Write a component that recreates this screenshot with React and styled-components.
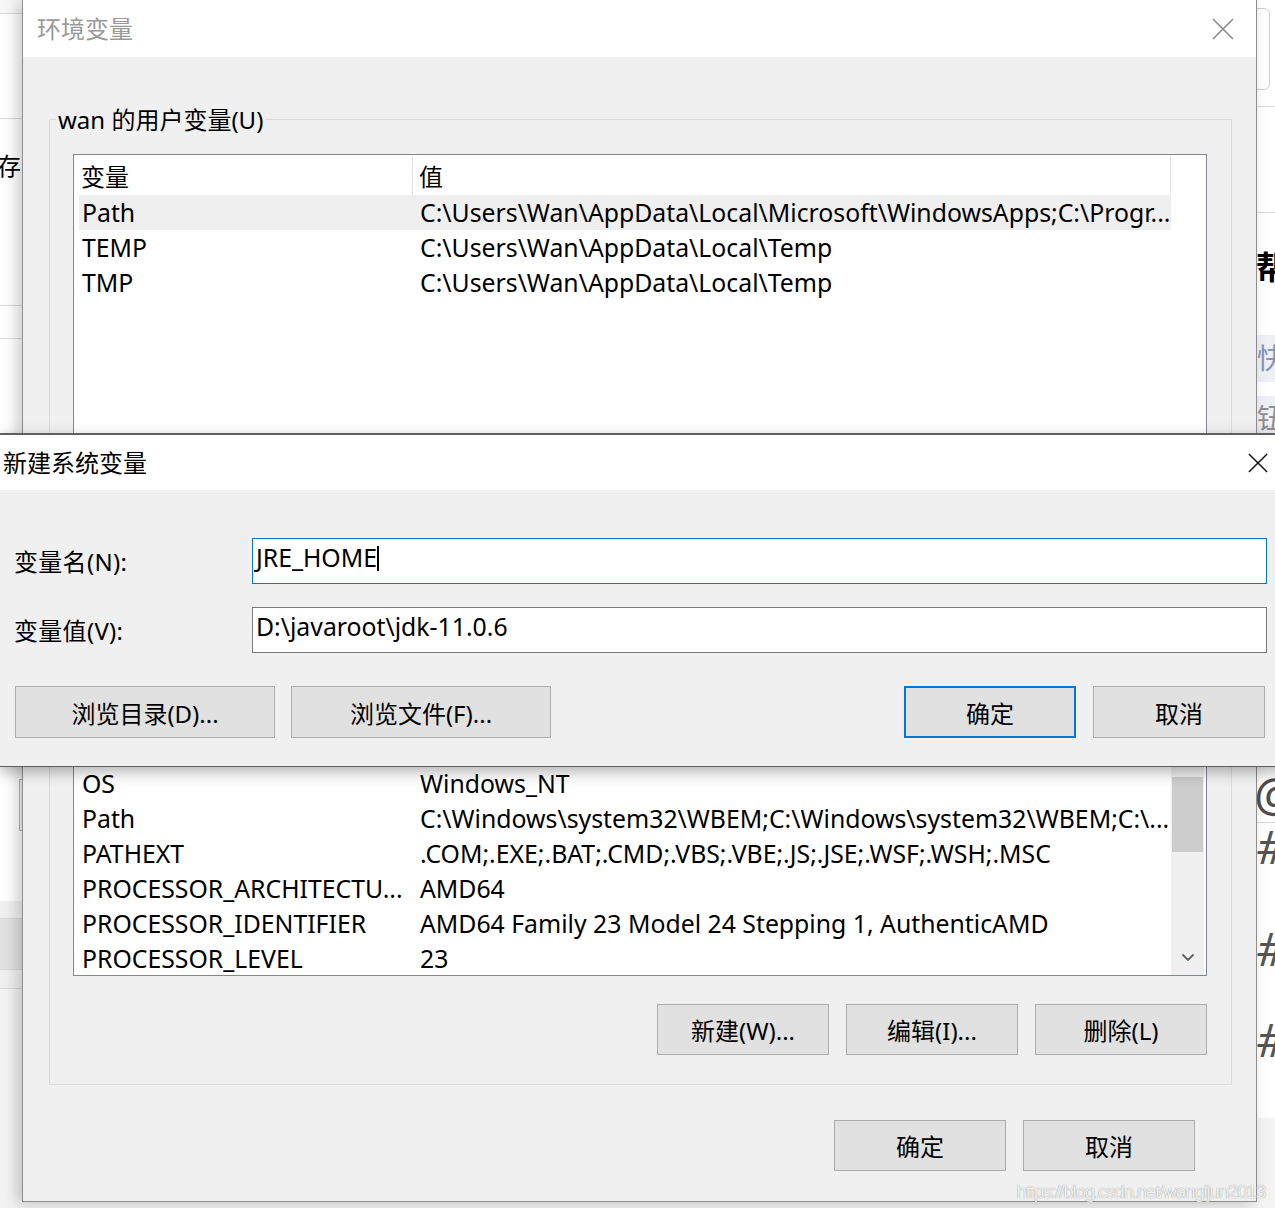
import React from 'react';
import styled, { createGlobalStyle } from 'styled-components';

const GlobalStyle = createGlobalStyle`
  html, body { margin: 0; padding: 0; }
  body {
    width: 1275px;
    height: 1208px;
    overflow: hidden;
    background: #f3f3f3;
    font-family: "Noto Sans", "Noto Sans CJK SC", sans-serif;
  }
  * { box-sizing: border-box; }
`;

const Desktop = styled.div`
  position: relative;
  width: 1275px;
  height: 1208px;
  overflow: hidden;
  font-size: 24px;
  color: #000;
`;

/* ---------- page behind the dialogs (only slivers are visible) ---------- */

const BackPage = styled.div`
  display: flex;
  justify-content: space-between;
  height: 100%;
`;

const LeftPane = styled.div`
  width: 40px;
  display: flex;
  flex-direction: column;
  background: #fff;
`;

const RightPane = styled.div`
  width: 30px;
  display: flex;
  flex-direction: column;
  background: #fff;
`;

const PaneBlock = styled.div`
  height: ${(p) => p.$h}px;
  flex-shrink: 0;
  background: ${(p) => p.$bg || '#fff'};
  border-bottom: ${(p) => (p.$line ? '1px solid #d9d9d9' : 'none')};
  padding-top: ${(p) => p.$pad || 0}px;
  display: flex;
  flex-direction: column;
`;

const PaneFill = styled.div`
  flex: 1;
  background: #f3f3f3;
`;

const CutText = styled.span`
  display: block;
  margin-left: ${(p) => p.$x || 0}px;
  margin-top: ${(p) => p.$y || 0}px;
  font-size: ${(p) => p.$size || 24}px;
  line-height: 1.2;
  font-weight: ${(p) => (p.$bold ? 700 : 400)};
  font-style: ${(p) => (p.$italic ? 'italic' : 'normal')};
  color: ${(p) => p.$color || '#000'};
  white-space: nowrap;
`;

const ScrollNub = styled.div`
  margin: 440px 0 0 19px;
  width: 6px;
  height: 52px;
  border: 1px solid #b5b5b5;
  background: #f4f4f4;
`;

const RoundBox = styled.div`
  margin-top: 8px;
  width: 25px;
  height: 82px;
  border: 1px solid #cfcfcf;
  border-radius: 6px;
`;

const TagBox = styled.div`
  margin-top: ${(p) => p.$top}px;
  height: ${(p) => p.$h}px;
  background: #eef0f6;
  display: flex;
  align-items: center;
`;

/* ---------- shared dialog pieces ---------- */

const TitleBar = styled.header`
  height: ${(p) => p.$h}px;
  flex-shrink: 0;
  background: #fff;
  display: flex;
  align-items: center;
  justify-content: space-between;
  padding: 0 ${(p) => p.$padRight}px 0 ${(p) => p.$padLeft}px;
`;

const Title = styled.span`
  font-size: 24px;
  color: ${(p) => p.$color};
  line-height: 1;
`;

const Button = styled.button`
  width: ${(p) => p.$w}px;
  height: ${(p) => p.$h || 51}px;
  padding: 0;
  background: #e1e1e1;
  border: ${(p) => (p.$default ? '2px solid #0078d7' : '1px solid #adadad')};
  font-family: inherit;
  font-size: 24px;
  color: #000;
  display: flex;
  align-items: center;
  justify-content: center;
`;

const ButtonRow = styled.div`
  display: flex;
  justify-content: ${(p) => p.$justify || 'flex-end'};
  gap: ${(p) => p.$gap || 17}px;
  margin-top: ${(p) => p.$top}px;
  margin-right: ${(p) => p.$right || 0}px;
  margin-left: ${(p) => p.$left || 0}px;
`;

const ButtonGroup = styled.div`
  display: flex;
  gap: ${(p) => p.$gap}px;
`;

const CloseIcon = ({ color, size = 22 }) => (
  <svg width={size} height={size} viewBox="0 0 22 22">
    <path d="M1 1 L21 21 M21 1 L1 21" stroke={color} strokeWidth="1.6" fill="none" />
  </svg>
);

/* ---------- 环境变量 dialog ---------- */

const EnvDialog = styled.section`
  position: absolute;
  left: 22px;
  top: 0;
  width: 1235px;
  height: 1202px;
  border: 1px solid #8e8e8e;
  border-top: none;
  background: #f0f0f0;
  box-shadow: -5px 2px 14px rgba(0, 0, 0, 0.2);
  display: flex;
  flex-direction: column;
`;

const EnvBody = styled.div`
  flex: 1;
  display: flex;
  flex-direction: column;
  padding: 48px 24px 0 26px;
`;

const GroupBox = styled.fieldset`
  margin: ${(p) => p.$top || 0}px 0 0;
  min-width: 0;
  border: 1px solid #dcdcdc;
  padding: 21px 24px 29px 23px;
`;

const Legend = styled.legend`
  margin-left: -17px;
  padding: 2px 2px 0;
  font-size: 24px;
  line-height: 26px;
  color: #000;
`;

const ListBox = styled.div`
  height: ${(p) => p.$h}px;
  border: 1px solid #828790;
  background: #fff;
  padding-left: 5px;
  display: flex;
  overflow: hidden;
`;

const ListContent = styled.div`
  flex: 1;
  min-width: 0;
  display: flex;
  flex-direction: column;
`;

const HeaderRow = styled.div`
  height: 40px;
  flex-shrink: 0;
  display: grid;
  grid-template-columns: 334px 1fr;
`;

const HeaderCell = styled.div`
  border-right: 1px solid #e5e5e5;
  padding-left: ${(p) => p.$pad}px;
  line-height: 42px;
  margin: 1px 0 2px;
`;

const Row = styled.div`
  height: 35px;
  flex-shrink: 0;
  display: grid;
  grid-template-columns: 334px 1fr;
  background: ${(p) => (p.$selected ? '#efefef' : 'transparent')};
`;

const Cell = styled.div`
  padding-left: ${(p) => p.$pad}px;
  font-size: 24.8px;
  line-height: 34px;
  white-space: nowrap;
  overflow: hidden;
`;

const Gutter = styled.div`
  width: 35px;
  flex-shrink: 0;
  display: flex;
  flex-direction: column;
  padding-right: 2px;
`;

const ScrollTrack = styled.div`
  flex: 1;
  display: flex;
  flex-direction: column;
  background: #f0f0f0;
`;

const ScrollArrow = styled.div`
  height: 35px;
  flex-shrink: 0;
  display: flex;
  align-items: center;
  justify-content: center;
  margin-top: ${(p) => (p.$bottom ? 'auto' : '0')};
`;

const ScrollThumb = styled.div`
  margin: ${(p) => p.$offset}px 1px 0;
  height: 75px;
  background: #cdcdcd;
`;

const Chevron = ({ up }) => (
  <svg width="14" height="9" viewBox="0 0 14 9">
    <path
      d={up ? 'M1.5 7.5 L7 2 L12.5 7.5' : 'M1.5 1.5 L7 7 L12.5 1.5'}
      stroke="#606060"
      strokeWidth="1.8"
      fill="none"
    />
  </svg>
);

const VarList = ({ height, rows, scroll }) => (
  <ListBox $h={height}>
    <ListContent>
      <HeaderRow>
        <HeaderCell $pad={2}>变量</HeaderCell>
        <HeaderCell $pad={6}>值</HeaderCell>
      </HeaderRow>
      {rows.map(([name, value, selected]) => (
        <Row key={name} $selected={selected}>
          <Cell $pad={3}>{name}</Cell>
          <Cell $pad={7}>{value}</Cell>
        </Row>
      ))}
    </ListContent>
    <Gutter>
      {scroll && (
        <ScrollTrack>
          <ScrollArrow>
            <Chevron up />
          </ScrollArrow>
          <ScrollThumb $offset={121} />
          <ScrollArrow $bottom>
            <Chevron />
          </ScrollArrow>
        </ScrollTrack>
      )}
    </Gutter>
  </ListBox>
);

/* ---------- 新建系统变量 dialog ---------- */

const NewVarDialog = styled.section`
  position: absolute;
  left: -1px;
  top: 433px;
  width: 1290px;
  height: 334px;
  border: 1px solid #5f5f5f;
  border-top-width: 2px;
  background: #f0f0f0;
  box-shadow: 0 5px 14px rgba(0, 0, 0, 0.3);
  display: flex;
  flex-direction: column;
`;

const NewVarBody = styled.div`
  flex: 1;
  padding: 48px 21px 0 14px;
  display: flex;
  flex-direction: column;
`;

const FormRow = styled.div`
  display: grid;
  grid-template-columns: 238px 1fr;
  align-items: center;
  margin-top: ${(p) => p.$top || 0}px;
`;

const Label = styled.label`
  font-size: 24px;
  line-height: 30px;
  padding-top: 2px;
  letter-spacing: 0.3px;
`;

const Field = styled.div`
  height: 46px;
  border: 1px solid ${(p) => (p.$focused ? '#0078d7' : '#7a7a7a')};
  background: #fff;
  padding-left: 3px;
  line-height: 36px;
  font-size: 24.8px;
  white-space: nowrap;
`;

const Caret = styled.span`
  display: inline-block;
  width: 2px;
  height: 25px;
  background: #000;
  vertical-align: -4px;
`;

const Watermark = styled.div`
  position: absolute;
  right: 10px;
  bottom: 5px;
  font-family: "Liberation Sans", Arial, sans-serif;
  font-size: 19px;
  letter-spacing: -1.3px;
  color: rgba(255, 255, 255, 0.85);
  text-shadow: 0 0 1px rgba(120, 120, 120, 0.9);
`;

const userVars = [
  ['Path', 'C:\\Users\\Wan\\AppData\\Local\\Microsoft\\WindowsApps;C:\\Progr...', true],
  ['TEMP', 'C:\\Users\\Wan\\AppData\\Local\\Temp'],
  ['TMP', 'C:\\Users\\Wan\\AppData\\Local\\Temp'],
];

const systemVars = [
  ['ComSpec', 'C:\\Windows\\system32\\cmd.exe'],
  ['DriverData', 'C:\\Windows\\System32\\Drivers\\DriverData'],
  ['NUMBER_OF_PROCESSORS', '12'],
  ['OS', 'Windows_NT'],
  ['Path', 'C:\\Windows\\system32\\WBEM;C:\\Windows\\system32\\WBEM;C:\\...'],
  ['PATHEXT', '.COM;.EXE;.BAT;.CMD;.VBS;.VBE;.JS;.JSE;.WSF;.WSH;.MSC'],
  ['PROCESSOR_ARCHITECTU...', 'AMD64'],
  ['PROCESSOR_IDENTIFIER', 'AMD64 Family 23 Model 24 Stepping 1, AuthenticAMD'],
  ['PROCESSOR_LEVEL', '23'],
];

export default function App() {
  return (
    <>
      <GlobalStyle />
      <Desktop>
        <BackPage>
          <LeftPane>
            <PaneBlock $h={14} $bg="#f7f7f7" $line />
            <PaneBlock $h={105} $line />
            <PaneBlock $h={187} $line $pad={33}>
              <CutText $x={-3}>存</CutText>
            </PaneBlock>
            <PaneBlock $h={33} $line />
            <PaneBlock $h={562}>
              <ScrollNub />
            </PaneBlock>
            <PaneBlock $h={18} $bg="#f0f0f0" $line />
            <PaneBlock $h={51} $bg="#e1e1e1" $line />
            <PaneBlock $h={19} $bg="#f0f0f0" $line />
            <PaneFill />
          </LeftPane>
          <RightPane>
            <PaneBlock $h={107} $line>
              <RoundBox />
            </PaneBlock>
            <PaneBlock $h={106} $line />
            <PaneBlock $h={121} $pad={35}>
              <CutText $x={11} $size={32} $bold>帮助</CutText>
            </PaneBlock>
            <TagBox $top={1} $h={47}>
              <CutText $x={12} $size={28} $color="#8a93b3">快捷</CutText>
            </TagBox>
            <TagBox $top={14} $h={45}>
              <CutText $x={12} $size={28} $color="#8f8f8f">钮</CutText>
            </TagBox>
            <PaneBlock $h={320} />
            <PaneBlock $h={62} $line>
              <CutText $x={9} $y={4} $size={48} $color="#4d4d4d">@</CutText>
            </PaneBlock>
            <PaneBlock $h={100}>
              <CutText $x={11} $y={-4} $size={46} $italic $color="#555">#</CutText>
            </PaneBlock>
            <PaneBlock $h={95}>
              <CutText $x={11} $y={-2} $size={46} $italic $color="#555">#</CutText>
            </PaneBlock>
            <PaneBlock $h={100}>
              <CutText $x={11} $y={-6} $size={46} $italic $color="#555">#</CutText>
            </PaneBlock>
            <PaneFill />
          </RightPane>
        </BackPage>

        <EnvDialog>
          <TitleBar $h={57} $padLeft={14} $padRight={22}>
            <Title $color="#9a9a9a">环境变量</Title>
            <CloseIcon color="#8a8a8a" />
          </TitleBar>
          <EnvBody>
            <GroupBox>
              <Legend>wan 的用户变量(U)</Legend>
              <VarList height={290} rows={userVars} />
              <ButtonRow $top={28}>
                <Button $w={172}>新建(N)...</Button>
                <Button $w={172}>编辑(E)...</Button>
                <Button $w={172}>删除(D)</Button>
              </ButtonRow>
            </GroupBox>
            <GroupBox $top={18}>
              <Legend>系统变量(S)</Legend>
              <VarList height={356} rows={systemVars} scroll />
              <ButtonRow $top={28}>
                <Button $w={172}>新建(W)...</Button>
                <Button $w={172}>编辑(I)...</Button>
                <Button $w={172}>删除(L)</Button>
              </ButtonRow>
            </GroupBox>
            <ButtonRow $top={35} $right={37}>
              <Button $w={172}>确定</Button>
              <Button $w={172}>取消</Button>
            </ButtonRow>
          </EnvBody>
        </EnvDialog>

        <NewVarDialog>
          <TitleBar $h={55} $padLeft={3} $padRight={20}>
            <Title $color="#000">新建系统变量</Title>
            <CloseIcon color="#111" size={20} />
          </TitleBar>
          <NewVarBody>
            <FormRow>
              <Label>变量名(N):</Label>
              <Field $focused>
                JRE_HOME
                <Caret />
              </Field>
            </FormRow>
            <FormRow $top={23}>
              <Label>变量值(V):</Label>
              <Field>D:\javaroot\jdk-11.0.6</Field>
            </FormRow>
            <ButtonRow $top={33} $justify="space-between" $left={1} $right={2}>
              <ButtonGroup $gap={16}>
                <Button $w={260} $h={52}>浏览目录(D)...</Button>
                <Button $w={260} $h={52}>浏览文件(F)...</Button>
              </ButtonGroup>
              <ButtonGroup $gap={17}>
                <Button $w={172} $h={52} $default>确定</Button>
                <Button $w={172} $h={52}>取消</Button>
              </ButtonGroup>
            </ButtonRow>
          </NewVarBody>
        </NewVarDialog>

        <Watermark>https://blog.csdn.net/wangijun2013</Watermark>
      </Desktop>
    </>
  );
}
